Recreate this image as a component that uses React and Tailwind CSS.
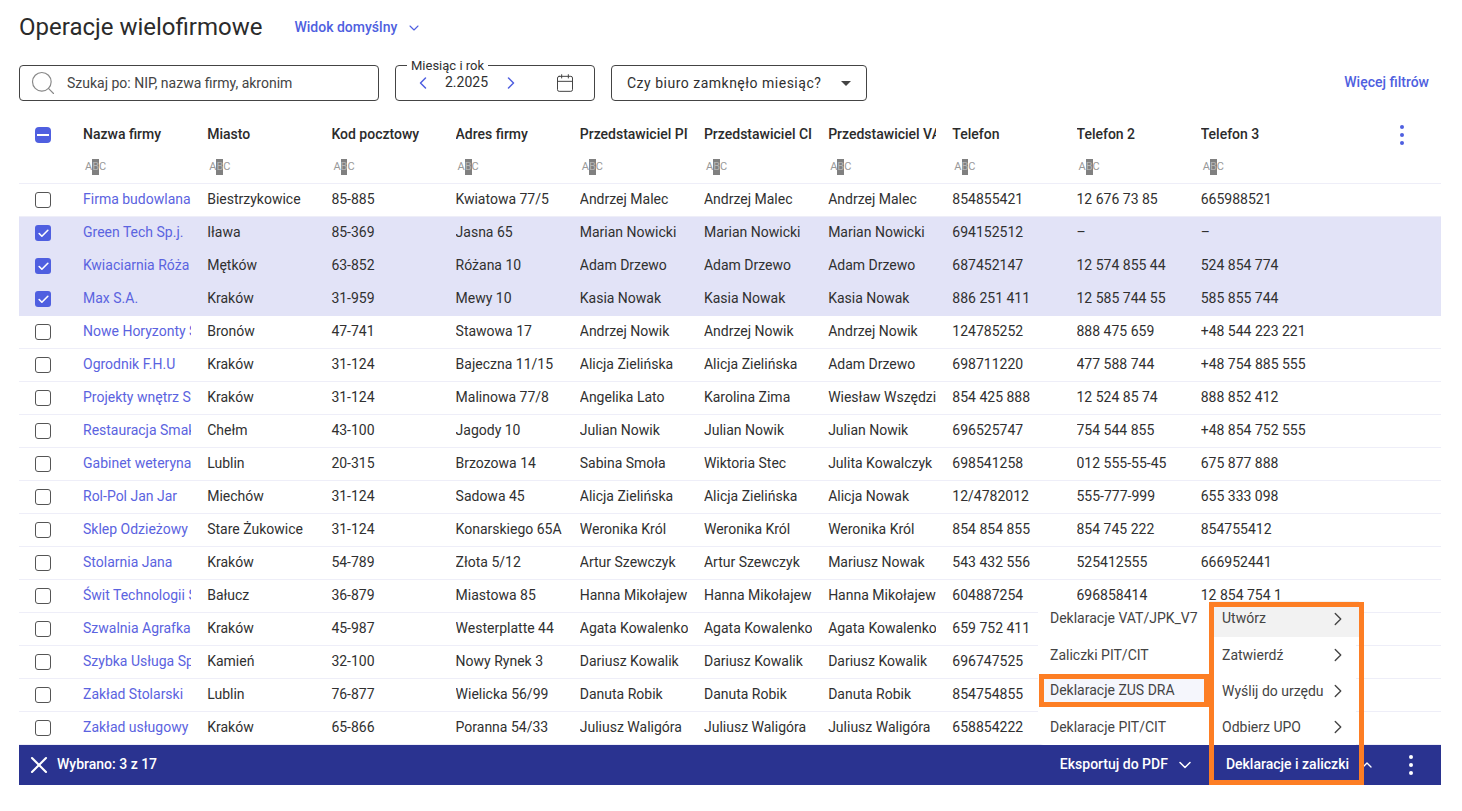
import { ChevronDown, ChevronLeft, ChevronRight, ChevronUp, Check, X, Search, Calendar } from "lucide-react";

const columns = [
  "Nazwa firmy",
  "Miasto",
  "Kod pocztowy",
  "Adres firmy",
  "Przedstawiciel PIT",
  "Przedstawiciel CIT",
  "Przedstawiciel VAT",
  "Telefon",
  "Telefon 2",
  "Telefon 3",
];

const rows = [
  ["Firma budowlana", "Biestrzykowice", "85-885", "Kwiatowa 77/5", "Andrzej Malec", "Andrzej Malec", "Andrzej Malec", "854855421", "12 676 73 85", "665988521"],
  ["Green Tech Sp.j.", "Iława", "85-369", "Jasna 65", "Marian Nowicki", "Marian Nowicki", "Marian Nowicki", "694152512", "–", "–"],
  ["Kwiaciarnia Róża", "Mętków", "63-852", "Różana 10", "Adam Drzewo", "Adam Drzewo", "Adam Drzewo", "687452147", "12 574 855 44", "524 854 774"],
  ["Max S.A.", "Kraków", "31-959", "Mewy 10", "Kasia Nowak", "Kasia Nowak", "Kasia Nowak", "886 251 411", "12 585 744 55", "585 855 744"],
  ["Nowe Horyzonty S", "Bronów", "47-741", "Stawowa 17", "Andrzej Nowik", "Andrzej Nowik", "Andrzej Nowik", "124785252", "888 475 659", "+48 544 223 221"],
  ["Ogrodnik F.H.U", "Kraków", "31-124", "Bajeczna 11/15", "Alicja Zielińska", "Alicja Zielińska", "Adam Drzewo", "698711220", "477 588 744", "+48 754 885 555"],
  ["Projekty wnętrz St", "Kraków", "31-124", "Malinowa 77/8", "Angelika Lato", "Karolina Zima", "Wiesław Wszędzi", "854 425 888", "12 524 85 74", "888 852 412"],
  ["Restauracja Smak", "Chełm", "43-100", "Jagody 10", "Julian Nowik", "Julian Nowik", "Julian Nowik", "696525747", "754 544 855", "+48 854 752 555"],
  ["Gabinet weterynar", "Lublin", "20-315", "Brzozowa 14", "Sabina Smoła", "Wiktoria Stec", "Julita Kowalczyk", "698541258", "012 555-55-45", "675 877 888"],
  ["Rol-Pol Jan Jar", "Miechów", "31-124", "Sadowa 45", "Alicja Zielińska", "Alicja Zielińska", "Alicja Nowak", "12/4782012", "555-777-999", "655 333 098"],
  ["Sklep Odzieżowy", "Stare Żukowice", "31-124", "Konarskiego 65A", "Weronika Król", "Weronika Król", "Weronika Król", "854 854 855", "854 745 222", "854755412"],
  ["Stolarnia Jana", "Kraków", "54-789", "Złota 5/12", "Artur Szewczyk", "Artur Szewczyk", "Mariusz Nowak", "543 432 556", "525412555", "666952441"],
  ["Świt Technologii S", "Bałucz", "36-879", "Miastowa 85", "Hanna Mikołajew", "Hanna Mikołajew", "Hanna Mikołajew", "604887254", "696858414", "12 854 754 1"],
  ["Szwalnia Agrafka", "Kraków", "45-987", "Westerplatte 44", "Agata Kowalenko", "Agata Kowalenko", "Agata Kowalenko", "659 752 411", "", ""],
  ["Szybka Usługa Sp", "Kamień", "32-100", "Nowy Rynek 3", "Dariusz Kowalik", "Dariusz Kowalik", "Dariusz Kowalik", "696747525", "", ""],
  ["Zakład Stolarski", "Lublin", "76-877", "Wielicka 56/99", "Danuta Robik", "Danuta Robik", "Danuta Robik", "854754855", "", ""],
  ["Zakład usługowy", "Kraków", "65-866", "Poranna 54/33", "Juliusz Waligóra", "Juliusz Waligóra", "Juliusz Waligóra", "658854222", "", ""],
];

const selected = ["Green Tech Sp.j.", "Kwiaciarnia Róża", "Max S.A."];

const AbcIcon = () => (
  <span className="flex items-center h-4 ml-[2px] text-[11px] leading-4 text-[#999]">
    A<span className="bg-[#808080] text-[#b5b5b5] h-4">B</span>C
  </span>
);

const Checkbox = ({ checked }) => (
  <div
    className={
      checked
        ? "w-4 h-4 ml-4 rounded-[3px] bg-[#4f5fe0] flex items-center justify-center"
        : "w-4 h-4 ml-4 rounded-[3px] border border-[#555] bg-white"
    }
  >
    {checked && <Check size={13} strokeWidth={3} className="text-white" />}
  </div>
);

const DotsIcon = ({ className }) => (
  <div className={"flex flex-col gap-[4px] " + className}>
    <span className="w-1 h-1 rounded-full bg-current" />
    <span className="w-1 h-1 rounded-full bg-current" />
    <span className="w-1 h-1 rounded-full bg-current" />
  </div>
);

const gridClass = "grid grid-cols-[64px_repeat(10,124.2px)_1fr] items-center";

const App = () => {
  return (
    <div className="bg-white h-[811px] pl-[19px] pr-[21px] text-[14px] text-[#303030] font-['Roboto',sans-serif] overflow-hidden">
      {/* title */}
      <div className="flex items-center h-[54px]">
        <h1 className="text-[24px] text-[#2b2b2b] leading-none">Operacje wielofirmowe</h1>
        <a className="ml-8 text-[#4f5fe0] font-medium">Widok domyślny</a>
        <ChevronDown size={16} strokeWidth={1.6} className="ml-[9px] mt-[1px] text-[#4f5fe0]" />
      </div>

      {/* filters */}
      <div className="flex items-center gap-4 mt-[11px] h-[36px]">
        <div className="flex items-center w-[360px] h-full border border-[#444] rounded-[4px] pl-[9px]">
          <Search size={28} strokeWidth={1} className="text-[#888]" />
          <span className="ml-[10px] text-[#444]">Szukaj po: NIP, nazwa firmy, akronim</span>
        </div>
        <div className="relative flex items-center w-[200px] h-full border border-[#444] rounded-[4px] pl-[17px]">
          <span className="absolute -top-[8px] left-[11px] bg-white px-[4px] text-[13px] leading-[15px]">Miesiąc i rok</span>
          <ChevronLeft size={20} strokeWidth={1.8} className="text-[#4f5fe0]" />
          <span className="ml-3 -mt-[2px]">2.2025</span>
          <ChevronRight size={20} strokeWidth={1.8} className="ml-[13px] text-[#4f5fe0]" />
          <Calendar size={20} strokeWidth={1.2} className="ml-[34px] text-[#444]" />
        </div>
        <div className="flex items-center w-[256px] h-full border border-[#444] rounded-[4px] pl-[15px]">
          <span className="tracking-[0.5px]">Czy biuro zamknęło miesiąc?</span>
          <span className="ml-5 w-0 h-0 border-x-[5px] border-x-transparent border-t-[5px] border-t-[#444]" />
        </div>
        <a className="ml-auto mr-3 -mt-[2px] text-[#4f5fe0] font-medium">Więcej filtrów</a>
      </div>

      {/* table */}
      <div className="mt-[17px]">
        <div className={gridClass + " h-[33px]"}>
          <div className="w-4 h-4 ml-4 rounded-[4px] bg-[#4f5fe0] flex items-center justify-center">
            <span className="w-3 h-[2px] bg-white" />
          </div>
          {columns.map((col) => (
            <div key={col} className="w-[108px] overflow-hidden whitespace-nowrap font-medium text-[#2b2b2b]">
              {col}
            </div>
          ))}
          <DotsIcon className="ml-[75px] text-[#4f5fe0]" />
        </div>
        <div className={gridClass + " h-[33px] border-b border-[#eeeef8]"}>
          <div />
          {columns.map((col) => (
            <AbcIcon key={col} />
          ))}
        </div>
        {rows.map((row) => {
          const isSelected = selected.includes(row[0]);
          return (
            <div
              key={row[0]}
              className={
                gridClass +
                " h-[33px] border-b " +
                (isSelected ? "bg-[#e2e3f7] border-[#e2e3f7]" : "border-[#eeeef8]")
              }
            >
              <Checkbox checked={isSelected} />
              {row.map((cell, index) => (
                <div
                  key={index}
                  className={
                    "overflow-hidden whitespace-nowrap pb-[2px] " +
                    (index === 0 ? "text-[#5b63e0] " : "") +
                    (index >= 7 ? "w-[120px]" : "w-[108px]")
                  }
                >
                  {cell}
                </div>
              ))}
            </div>
          );
        })}
      </div>

      {/* bottom bar */}
      <div className="relative flex items-center h-10 bg-[#2a3390] text-white font-medium">
        <X size={28} strokeWidth={1.8} className="ml-[6px]" />
        <span className="ml-1 pb-[2px]">Wybrano: 3 z 17</span>
        <span className="ml-auto pb-[2px]">Eksportuj do PDF</span>
        <ChevronDown size={20} strokeWidth={1.8} className="ml-[7px]" />
        <span className="ml-[31px] pb-[2px]">Deklaracje i zaliczki</span>
        <ChevronUp size={16} className="ml-[10px]" />
        <DotsIcon className="ml-[34px] mr-[28px] text-white" />

        {/* submenu */}
        <div className="absolute bottom-full left-[1019px] w-[172px] h-[144px] bg-white rounded-l-[6px] text-[#444] font-normal flex flex-col">
          <div className="h-[36px] flex items-center pl-3 pb-[2px]">Deklaracje VAT/JPK_V7</div>
          <div className="h-[36px] flex items-center pl-3">Zaliczki PIT/CIT</div>
          <div className="h-[33px] mt-[1px] mb-[2px] mx-[1px] flex items-center pl-[6px] bg-[#f5f6fc] border-[5px] border-[#fd7e24]">Deklaracje ZUS DRA</div>
          <div className="h-[36px] flex items-center pl-3">Deklaracje PIT/CIT</div>
        </div>

        {/* menu */}
        <div className="absolute bottom-full left-[1191px] w-[146px] h-[144px] bg-white text-[#444] font-normal flex flex-col">
          {["Utwórz", "Zatwierdź", "Wyślij do urzędu", "Odbierz UPO"].map((item, index) => (
            <div
              key={item}
              className={
                "h-[36px] flex items-center justify-between pl-3 pr-[7px] " +
                (index === 0 ? "bg-[#f2f2f2] -mr-[3px]" : "")
              }
            >
              <span className={index === 0 ? "-mt-[2px]" : ""}>{item}</span>
              <ChevronRight size={22} strokeWidth={1.5} className={index === 0 ? "mr-[3px] text-[#444]" : "text-[#444]"} />
            </div>
          ))}
        </div>

        {/* orange frame */}
        <div className="absolute left-[1190px] -top-[143px] w-[155px] h-[183px] border-[5px] border-[#fd7e24] pointer-events-none" />
      </div>
    </div>
  );
};

export default App;
